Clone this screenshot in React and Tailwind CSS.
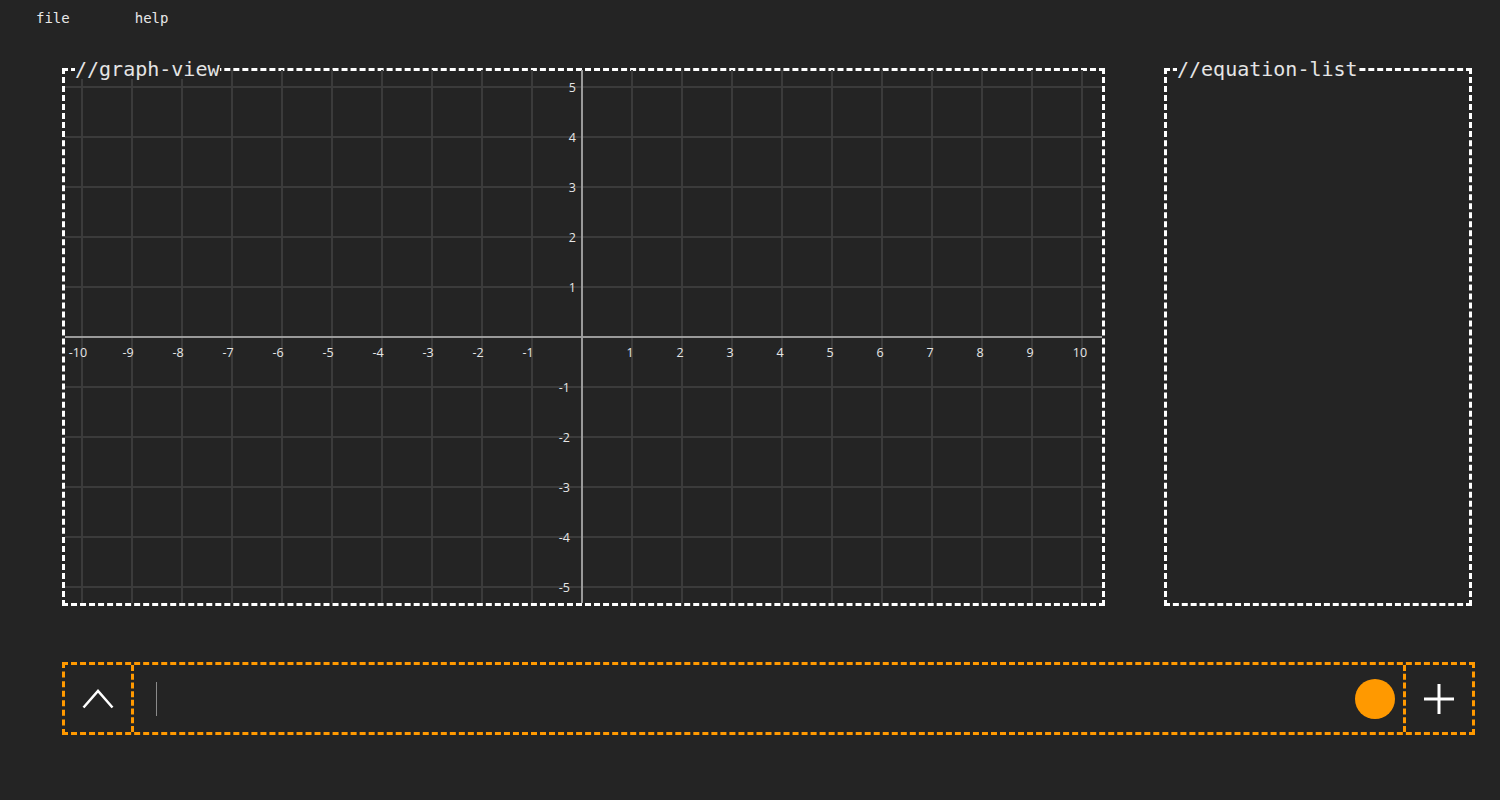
import React from 'react';

const W = 1037;
const H = 533;
const X0 = 517;
const Y0 = 267;
const UNIT = 50;

const GraphGrid = () => {
    const xs = [];
    for (let i = -10; i <= 10; i++) xs.push(i);
    const ys = [];
    for (let i = -5; i <= 5; i++) ys.push(i);

    return (
        <svg width={W} height={H} className="block">
            {xs.map((i) => (
                <line key={'v' + i} x1={X0 + i * UNIT} y1={0} x2={X0 + i * UNIT} y2={H} stroke="#3b3b3b" strokeWidth="2" />
            ))}
            {ys.map((i) => (
                <line key={'h' + i} x1={0} y1={Y0 - i * UNIT} x2={W} y2={Y0 - i * UNIT} stroke="#3b3b3b" strokeWidth="2" />
            ))}
            {/* axes */}
            <line x1={X0} y1={0} x2={X0} y2={H} stroke="#9a9a9a" strokeWidth="2" />
            <line x1={0} y1={Y0} x2={W} y2={Y0} stroke="#9a9a9a" strokeWidth="2" />

            {xs.filter((i) => i !== 0).map((i) => (
                <text
                    key={'xl' + i}
                    x={X0 + i * UNIT - (i < 0 ? 4 : 2)}
                    y={Y0 + 20}
                    textAnchor="middle"
                    fill="#e6e6e6"
                    fontSize="12.5"
                    fontFamily="'Open Sans', sans-serif"
                >
                    {i}
                </text>
            ))}
            {ys.filter((i) => i !== 0).map((i) => (
                <text
                    key={'yl' + i}
                    x={X0 - (i < 0 ? 12 : 6)}
                    y={Y0 - i * UNIT + 4.5}
                    textAnchor="end"
                    fill="#e6e6e6"
                    fontSize="12.5"
                    fontFamily="'Open Sans', sans-serif"
                >
                    {i}
                </text>
            ))}
        </svg>
    );
};

const Panel = ({ title, className, children }) => (
    <fieldset className={`border-[3px] border-dashed border-white ${className}`}>
        <legend className="relative z-10 ml-[10px] bg-[#242424] text-[20px] leading-[20px] text-[#e5e5e5]">
            {title}
        </legend>
        {children}
    </fieldset>
);

export default function App() {
    return (
        <div className="min-h-screen h-[800px] bg-[#242424] font-['DejaVu_Sans_Mono',monospace] overflow-hidden">
            {/* menu */}
            <div className="flex h-[36px] items-center pl-[36px] gap-[65px] text-[14px] text-[#e8e8e8]">
                <span>file</span>
                <span>help</span>
            </div>

            <div className="flex pl-[62px] mt-[23px] gap-[59px]">
                <Panel title="//graph-view" className="w-[1043px]">
                    <div className="-mt-[9px]">
                        <GraphGrid />
                    </div>
                </Panel>
                <Panel title="//equation-list" className="w-[308px]">
                    <div className="h-[524px]" />
                </Panel>
            </div>

            {/* input bar */}
            <div className="ml-[62px] mt-[56px] flex h-[73px] w-[1413px] border-[3px] border-dashed border-[#ff9900]">
                <button className="flex w-[69px] items-center justify-center border-r-[3px] border-dashed border-[#ff9900]">
                    <svg width="32" height="20" viewBox="0 0 32 20">
                        <polyline points="1.5,18.5 16,2 30.5,18.5" fill="none" stroke="white" strokeWidth="2.5" />
                    </svg>
                </button>
                <div className="flex flex-1 items-center pl-[22px] pr-[8px]">
                    <div className="h-[34px] w-px bg-[#8a8a8a]" />
                    <div className="flex-1" />
                    <div className="h-[40px] w-[40px] rounded-full bg-[#ff9900]" />
                </div>
                <button className="flex w-[69px] items-center justify-center border-l-[3px] border-dashed border-[#ff9900]">
                    <svg width="30" height="30" viewBox="0 0 30 30">
                        <line x1="15" y1="0" x2="15" y2="30" stroke="white" strokeWidth="3" />
                        <line x1="0" y1="15" x2="30" y2="15" stroke="white" strokeWidth="3" />
                    </svg>
                </button>
            </div>
        </div>
    );
}
